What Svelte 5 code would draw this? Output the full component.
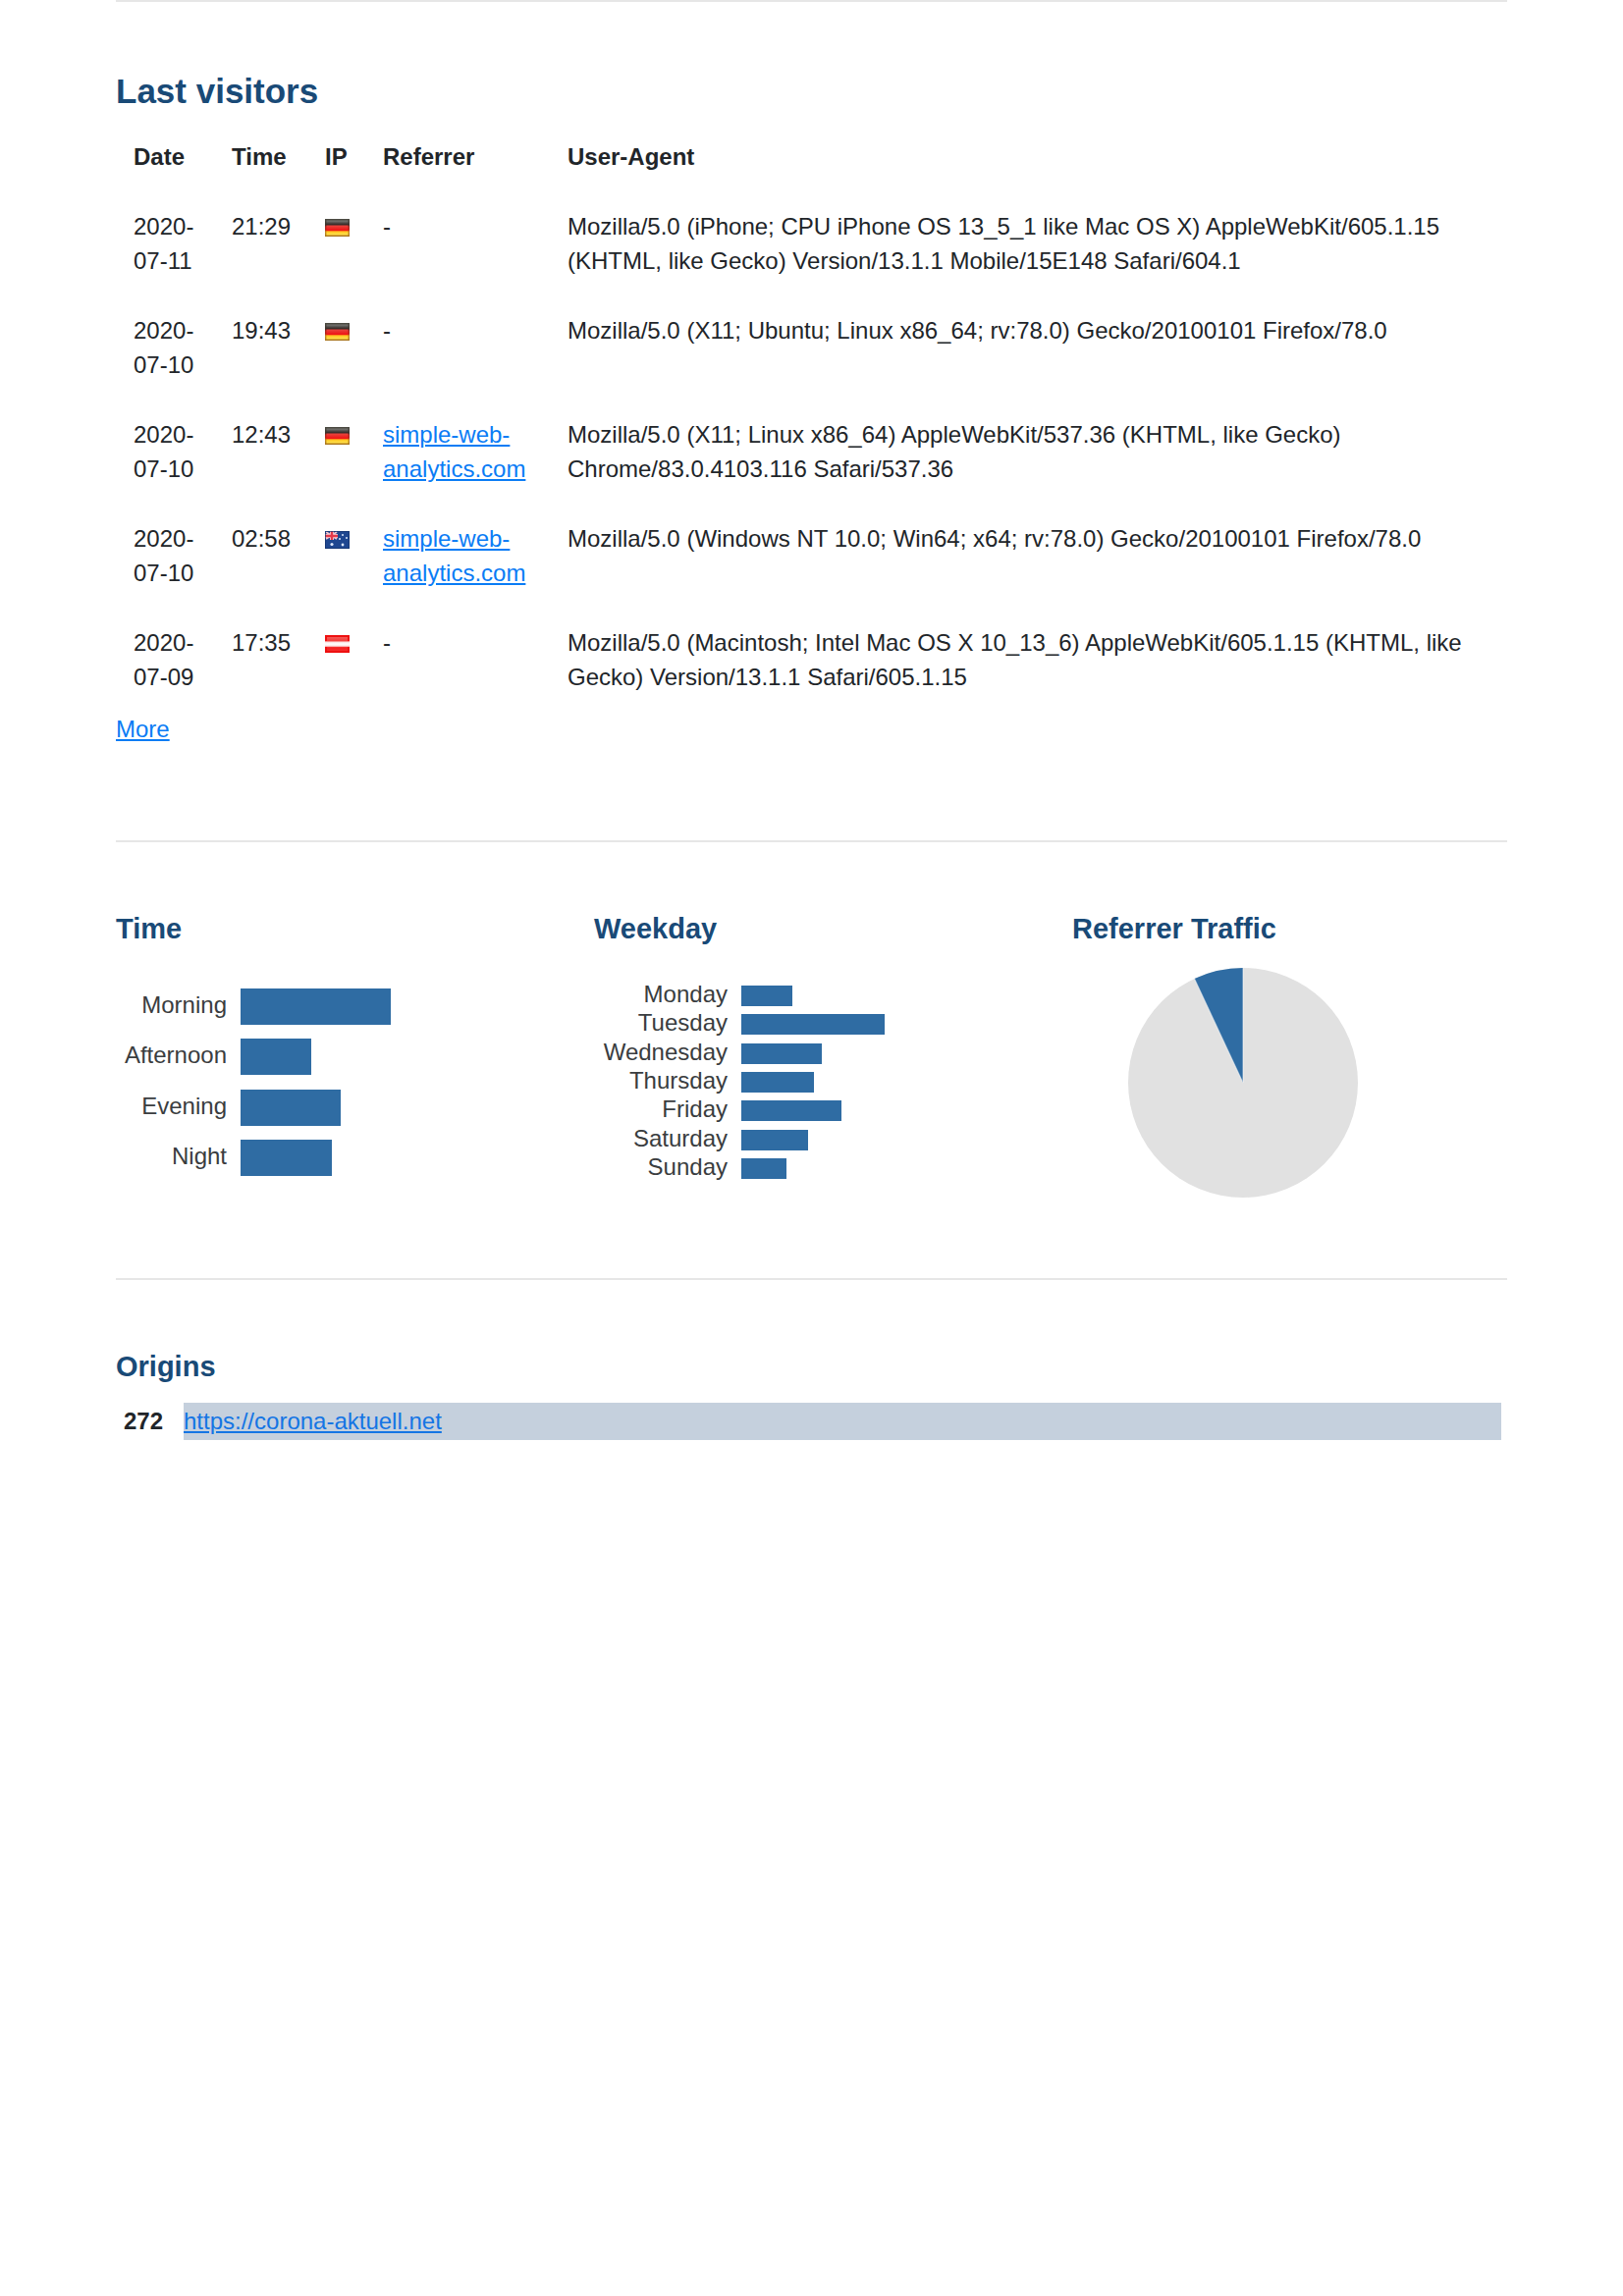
<script>
  const agents = [
    { date: '2020-07-11', time: '21:29', country: 'Germany', referrer: null, agent: 'Mozilla/5.0 (iPhone; CPU iPhone OS 13_5_1 like Mac OS X) AppleWebKit/605.1.15 (KHTML, like Gecko) Version/13.1.1 Mobile/15E148 Safari/604.1' },
    { date: '2020-07-10', time: '19:43', country: 'Germany', referrer: null, agent: 'Mozilla/5.0 (X11; Ubuntu; Linux x86_64; rv:78.0) Gecko/20100101 Firefox/78.0' },
    { date: '2020-07-10', time: '12:43', country: 'Germany', referrer: 'simple-web-analytics.com', agent: 'Mozilla/5.0 (X11; Linux x86_64) AppleWebKit/537.36 (KHTML, like Gecko) Chrome/83.0.4103.116 Safari/537.36' },
    { date: '2020-07-10', time: '02:58', country: 'Australia', referrer: 'simple-web-analytics.com', agent: 'Mozilla/5.0 (Windows NT 10.0; Win64; x64; rv:78.0) Gecko/20100101 Firefox/78.0' },
    { date: '2020-07-09', time: '17:35', country: 'Austria', referrer: null, agent: 'Mozilla/5.0 (Macintosh; Intel Mac OS X 10_13_6) AppleWebKit/605.1.15 (KHTML, like Gecko) Version/13.1.1 Safari/605.1.15' }
  ];

  const times = [
    { label: 'Morning', size: 153 },
    { label: 'Afternoon', size: 72 },
    { label: 'Evening', size: 102 },
    { label: 'Night', size: 93 }
  ];

  const weekdays = [
    { label: 'Monday', size: 52 },
    { label: 'Tuesday', size: 146 },
    { label: 'Wednesday', size: 82 },
    { label: 'Thursday', size: 74 },
    { label: 'Friday', size: 102 },
    { label: 'Saturday', size: 68 },
    { label: 'Sunday', size: 46 }
  ];
</script>

{#snippet flag(country)}
  <svg class="flag" viewBox="0 0 25 18" role="img" aria-label={country}>
    {#if country === 'Germany'}
      <defs>
        <linearGradient id="de" x1="0" y1="0" x2="0" y2="1">
          <stop offset="0" stop-color="#77766f" />
          <stop offset="0.14" stop-color="#6b6a66" />
          <stop offset="0.32" stop-color="#332a28" />
          <stop offset="0.4" stop-color="#e8403a" />
          <stop offset="0.64" stop-color="#ef1616" />
          <stop offset="0.72" stop-color="#ffc41f" />
          <stop offset="0.88" stop-color="#ffe04a" />
          <stop offset="1" stop-color="#e8ac2c" />
        </linearGradient>
        <linearGradient id="de-edge" x1="0" y1="0" x2="0" y2="1">
          <stop offset="0" stop-color="#4b4a42" />
          <stop offset="0.33" stop-color="#3b3029" />
          <stop offset="0.45" stop-color="#b0231c" />
          <stop offset="0.62" stop-color="#b0231c" />
          <stop offset="0.75" stop-color="#c48d1f" />
          <stop offset="1" stop-color="#a9761c" />
        </linearGradient>
      </defs>
      <rect width="25" height="18" fill="url(#de)" />
      <rect x="0.7" y="0.7" width="23.6" height="16.6" fill="none" stroke="url(#de-edge)" stroke-width="1.4" />
    {:else if country === 'Australia'}
      <rect width="25" height="18" fill="#1f4790" />
      <path d="M1 1L12 8M12 1L1 8" stroke="#f3c5cf" stroke-width="2" />
      <path d="M7 0V9M0 5H13" stroke="#f6d5da" stroke-width="4" />
      <path d="M7 0V9M0 5H13" stroke="#e43a4b" stroke-width="2.4" />
      <g fill="#dbe6fa">
        <circle cx="7" cy="13.5" r="1.6" />
        <circle cx="18" cy="4" r="1" />
        <circle cx="15" cy="8" r="1" />
        <circle cx="22" cy="7" r="1" />
        <circle cx="18" cy="14" r="1.4" />
      </g>
      <rect x="0.5" y="0.5" width="24" height="17" fill="none" stroke="#12306b" stroke-opacity="0.7" />
    {:else}
      <defs>
        <linearGradient id="at" x1="0" y1="0" x2="0" y2="1">
          <stop offset="0" stop-color="#f56a66" />
          <stop offset="0.32" stop-color="#f23c3a" />
          <stop offset="0.4" stop-color="#fbe3e2" />
          <stop offset="0.5" stop-color="#ffffff" />
          <stop offset="0.62" stop-color="#fbe3e2" />
          <stop offset="0.7" stop-color="#f41f1f" />
          <stop offset="1" stop-color="#f43030" />
        </linearGradient>
      </defs>
      <rect width="25" height="18" fill="url(#at)" />
      <path d="M0 1H25M0 17H25" stroke="#ee1010" stroke-width="2" />
      <path d="M1 0V6M24 0V6M1 12V18M24 12V18" stroke="#ee1010" stroke-width="2" />
    {/if}
  </svg>
{/snippet}

{#snippet bars(rows, kind)}
  <ul class="bars {kind}">
    {#each rows as row}
      <li>
        <span class="label">{row.label}</span>
        <span class="bar" style:width="{row.size}px"></span>
      </li>
    {/each}
  </ul>
{/snippet}

<main>
  <section class="visitors">
    <h2>Last visitors</h2>
    <table>
      <colgroup>
        <col class="c-date" />
        <col class="c-time" />
        <col class="c-ip" />
        <col class="c-ref" />
        <col />
      </colgroup>
      <thead>
        <tr>
          <th scope="col">Date</th>
          <th scope="col">Time</th>
          <th scope="col">IP</th>
          <th scope="col">Referrer</th>
          <th scope="col">User-Agent</th>
        </tr>
      </thead>
      <tbody>
        {#each agents as visit}
          <tr>
            <td>{visit.date}</td>
            <td>{visit.time}</td>
            <td>{@render flag(visit.country)}</td>
            <td>
              {#if visit.referrer}<a href="#referrer">{visit.referrer}</a>{:else}-{/if}
            </td>
            <td>{visit.agent}</td>
          </tr>
        {/each}
      </tbody>
    </table>
    <a href="#more">More</a>
  </section>

  <section class="charts">
    <div>
      <h3>Time</h3>
      {@render bars(times, 'times')}
    </div>
    <div>
      <h3>Weekday</h3>
      {@render bars(weekdays, 'weekdays')}
    </div>
    <div>
      <h3>Referrer Traffic</h3>
      <svg class="pie" viewBox="-100 -100 200 200" role="img" aria-label="Referrer Traffic">
        <circle r="100" fill="#e1e1e1" />
        <path d="M0 0L-42.3 -90.6A100 100 0 0 1 0 -100Z" fill="#2f6ca3" />
        <path d="M-42.3 -90.6L0 0V-100" fill="none" stroke="#fff" stroke-opacity="0.5" stroke-width="1" />
      </svg>
    </div>
  </section>

  <section class="origins">
    <h3>Origins</h3>
    <ul>
      <li>
        <strong>272</strong>
        <span class="origin"><a href="#origin">https://corona-aktuell.net</a></span>
      </li>
    </ul>
  </section>
</main>

<style>
  :global(body) {
    margin: 0;
    background: #fff;
  }

  main {
    padding: 0 118px;
    color: #212529;
    font: 24px/35px 'Liberation Sans', Arial, sans-serif;
  }

  section {
    padding-top: 70px;
    border-top: 2px solid #e6e6e6;
  }

  h2,
  h3 {
    margin: 0;
    color: #194a77;
    font-weight: 700;
  }

  h2 {
    margin-bottom: 10px;
    font-size: 35px;
    line-height: 42px;
  }

  h3 {
    font-size: 29px;
    line-height: 36px;
  }

  a {
    color: #0a7cf5;
    text-decoration: underline;
  }

  ul {
    margin: 0;
    padding: 0;
    list-style: none;
  }

  .visitors {
    padding-bottom: 96px;
  }

  table {
    width: 100%;
    table-layout: fixed;
    border-collapse: collapse;
  }

  .c-date {
    width: 100px;
  }

  .c-time {
    width: 95px;
  }

  .c-ip {
    width: 59px;
  }

  .c-ref {
    width: 188px;
  }

  th,
  td {
    padding: 18px;
    text-align: left;
    vertical-align: top;
  }

  th:nth-child(3),
  td:nth-child(3) {
    padding-right: 0;
  }

  .flag {
    display: block;
    width: 25px;
    height: 18px;
    margin-top: 10px;
  }

  .charts {
    display: grid;
    grid-template-columns: repeat(3, 1fr);
    gap: 44px;
    padding-bottom: 82px;
  }

  .bars {
    display: flex;
    flex-direction: column;
    justify-content: space-between;
  }

  .bars li {
    display: flex;
    align-items: center;
    gap: 14px;
  }

  .label {
    padding-bottom: 4px;
    color: #3a3d40;
    text-align: right;
  }

  .bar {
    height: 100%;
    background: #2f6ca3;
  }

  .times {
    height: 191px;
    margin-top: 43px;
  }

  .times li {
    height: 37px;
  }

  .times .label {
    width: 113px;
  }

  .weekdays {
    height: 197px;
    margin-top: 40px;
  }

  .weekdays li {
    height: 21px;
  }

  .weekdays .label {
    width: 136px;
  }

  .pie {
    display: block;
    width: 234px;
    height: 234px;
    margin: 22px 0 0 57px;
  }

  .origins ul {
    margin-top: 19px;
  }

  .origins li {
    display: flex;
    padding: 0 6px 0 8px;
    line-height: 38px;
  }

  .origins strong {
    width: 61px;
  }

  .origin {
    flex: 1;
    background: #c5d0dd;
  }

  .origin a {
    color: #1475e4;
  }
</style>
